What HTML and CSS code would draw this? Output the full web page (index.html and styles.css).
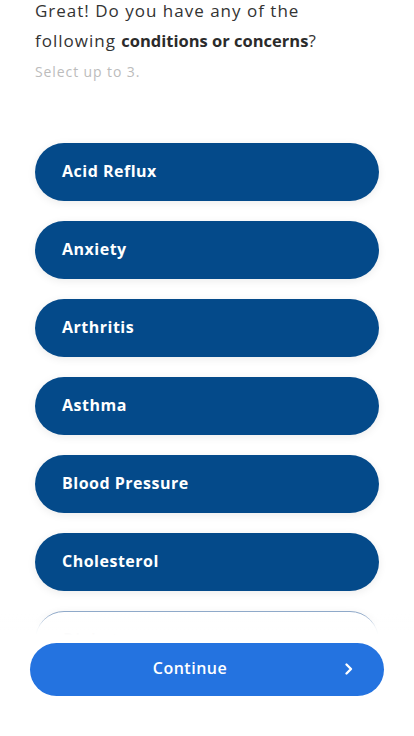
FILE: index.html
```html
<!DOCTYPE html>
<html lang="en">
<head>
  <meta charset="UTF-8" />
  <meta name="viewport" content="width=device-width, initial-scale=1" />
  <title>Conditions or concerns</title>
  <link rel="stylesheet" href="styles.css">
</head>
<body>
  <main class="quiz">
    <h1 class="question">Great! Do you have any of the following <strong>conditions or concerns</strong>?</h1>
    <p class="hint">Select up to 3.</p>

    <ul class="options">
      <li><button class="option" type="button">Acid Reflux</button></li>
      <li><button class="option" type="button">Anxiety</button></li>
      <li><button class="option" type="button">Arthritis</button></li>
      <li><button class="option" type="button">Asthma</button></li>
      <li><button class="option" type="button">Blood Pressure</button></li>
      <li><button class="option" type="button">Cholesterol</button></li>
      <li><button class="option option-light" type="button">Diabetes</button></li>
      <li><button class="option option-light" type="button">Digestion</button></li>
    </ul>
  </main>

  <div class="footer">
    <button class="continue" type="button">
      <span class="continue-label">Continue</span>
      <svg class="chevron" width="10" height="14" viewBox="0 0 10 14" aria-hidden="true">
        <polyline points="2.5,2.5 7,7 2.5,11.5" fill="none" stroke="#fff" stroke-width="2.4" stroke-linecap="round" stroke-linejoin="round" />
      </svg>
    </button>
  </div>
</body>
</html>
```

FILE: styles.css
```css
body {
  margin: 0;
  font-family: "Open Sans", "Liberation Sans", sans-serif;
  background: #fff;
  color: #333;
  overflow: hidden;
}
.quiz {
  padding: 0 35px;
}
.question {
  max-width: 320px;
  margin: -4px 0 0;
  font-size: 17px;
  font-weight: 400;
  line-height: 30px;
  letter-spacing: 1px;
  color: #333;
}
.question strong {
  font-size: 16.5px;
  font-weight: 700;
  letter-spacing: 0;
  color: #2b2b2b;
}
.hint {
  margin: 6px 0 0;
  font-size: 14px;
  line-height: 20px;
  letter-spacing: 0.9px;
  color: #bcbcbc;
}
.options {
  list-style: none;
  margin: 61px 0 0;
  padding: 0;
  display: flex;
  flex-direction: column;
  gap: 20px;
}
.option {
  display: block;
  width: 100%;
  height: 58px;
  padding: 0 27px 2px;
  border: none;
  border-radius: 29px;
  background: #044a8a;
  color: #fff;
  font-family: inherit;
  font-size: 16px;
  font-weight: 700;
  letter-spacing: 0.5px;
  text-align: left;
  box-shadow: 0 2px 8px rgba(0,0,0,0.08);
  cursor: pointer;
}
.option-light {
  background: #fff;
  color: #555;
  border: 1.5px solid #8fa9c9;
}
.footer {
  position: fixed;
  left: 0;
  right: 0;
  bottom: 0;
  padding: 30px 30px 40px;
  background: linear-gradient(to bottom, rgba(255,255,255,0) 0, rgba(255,255,255,0.9) 14px, #fff 22px);
}
.continue {
  position: relative;
  display: flex;
  align-items: center;
  width: 100%;
  height: 53px;
  padding: 0;
  border: none;
  border-radius: 27px;
  background: #2473e0;
  color: #fff;
  font-family: inherit;
  font-size: 16px;
  font-weight: 600;
  letter-spacing: 0.5px;
  cursor: pointer;
}
.continue-label {
  flex: 1;
  padding: 0 34px 3px 0;
  text-align: center;
}
.chevron {
  position: absolute;
  right: 30px;
  top: 19px;
}
```
